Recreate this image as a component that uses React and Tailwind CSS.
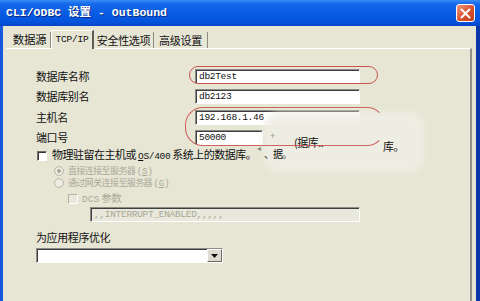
import React from "react";

const cjk = "font-['Noto_Sans_CJK_SC',sans-serif]";
const mono = "font-['Liberation_Mono','Noto_Sans_CJK_SC',monospace]";

function Input({ value, w, disabled }) {
  return (
    <div
      className={`h-[15px] flex items-center pl-[2px] border-t border-l border-t-[#8c8c86] border-l-[#8c8c86] border-b border-r border-b-[#ffffff] border-r-[#ffffff] shadow-[inset_1px_1px_0_#3e3e3e] ${
        disabled ? "bg-[#e9e8dc] text-[#a9a797]" : "bg-white text-[#111]"
      } ${mono} text-[9.5px] tracking-[-0.3px] leading-none`}
      style={{ width: w }}
    >
      <span className="pl-[1px]">{value}</span>
    </div>
  );
}

function Row({ label, value, w = 165, className = "" }) {
  return (
    <div className={`flex items-center h-[15px] ${className}`}>
      <div className={`w-[159px] text-[11px] tracking-[-0.4px] leading-none text-[#111] ${cjk}`}>{label}</div>
      <Input value={value} w={w} />
    </div>
  );
}

function Check({ disabled }) {
  return (
    <div
      className={`w-[10px] h-[10px] shrink-0 border-t border-l border-b border-r ${
        disabled
          ? "bg-[#e9e8dc] border-t-[#b4b2a4] border-l-[#b4b2a4] border-b-white border-r-white"
          : "bg-white border-t-[#6e6e6a] border-l-[#6e6e6a] border-b-white border-r-white shadow-[inset_1px_1px_0_#3a3a3a]"
      }`}
    />
  );
}

function Radio({ checked }) {
  return (
    <div className="w-[10px] h-[10px] shrink-0 rounded-full border border-[#b7b5a7] bg-[#ecebdf] flex items-center justify-center">
      {checked && <div className="w-[4px] h-[4px] rounded-full bg-[#a9a797]" />}
    </div>
  );
}

export default function App() {
  return (
    <div className="w-[480px] h-[301px] overflow-hidden relative flex flex-col bg-[#0b56e0]">
      {/* Title bar */}
      <div className="h-[26px] shrink-0 flex items-center justify-between pl-[6px] pr-[5px] bg-[linear-gradient(#3a8cf5_0%,#1469ea_15%,#0759e2_60%,#0553dc_85%,#0645c4_100%)]">
        <div className={`text-white font-bold text-[11.5px] leading-none whitespace-pre [text-shadow:1px_1px_0_#0b2a80] ${mono}`}>
          CLI/ODBC 设置 - OutBound
        </div>
        <div className="w-[19px] h-[18px] rounded-[3px] border border-white bg-[linear-gradient(135deg,#f09a7c,#d8502e_55%,#c2401f)] flex items-center justify-center">
          <svg width="11" height="11" viewBox="0 0 11 11">
            <path d="M1.5 1.5 L9.5 9.5 M9.5 1.5 L1.5 9.5" stroke="white" strokeWidth="2" strokeLinecap="round" />
          </svg>
        </div>
      </div>

      {/* Body */}
      <div className="flex-1 flex min-h-0">
        <div className="w-[3px] bg-[#1658de]" />
        <div className="flex-1 bg-[#e7e6d5] flex flex-col pl-[3px] pr-[4px] pt-[4px] min-w-0">
          {/* Tabs */}
          <div className="h-[18px] flex items-end pl-[3px] shrink-0 relative z-10">
            <div className={`w-[42px] h-[16px] flex items-center justify-center border-r border-r-[#8e8c7e] text-[11.5px] tracking-[-0.3px] leading-none text-[#111] ${cjk}`}>
              数据源
            </div>
            <div className={`w-[43px] h-[19px] -mb-[1px] bg-[#e7e6d5] flex items-center justify-center border-t border-l border-t-white border-l-white border-r-2 border-r-[#5e5c54] text-[9.5px] tracking-[-0.2px] leading-none text-[#111] ${mono}`}>
              TCP/IP
            </div>
            <div className={`w-[60px] h-[16px] flex items-center justify-center border-r border-r-[#8e8c7e] text-[11px] tracking-[-0.3px] leading-none text-[#111] ${cjk}`}>
              安全性选项
            </div>
            <div className={`w-[54px] h-[16px] flex items-center justify-center border-r border-r-[#8e8c7e] text-[11px] tracking-[-0.3px] leading-none text-[#111] ${cjk}`}>
              高级设置
            </div>
          </div>

          {/* Panel */}
          <div className="flex-1 border-t border-t-white border-r-2 border-r-[#93918a] flex flex-col pl-[30px] pt-[20px]">
            <Row label="数据库名称" value="db2Test" />
            <Row label="数据库别名" value="db2123" className="mt-[5px]" />
            <Row label="主机名" value="192.168.1.46" className="mt-[6px]" />
            <Row label="端口号" value="50000" w={68} className="mt-[5px]" />

            <div className={`mt-[4px] h-[13px] flex items-center pl-[1px] gap-[5px] text-[11px] tracking-[-0.5px] leading-none text-[#111] ${cjk}`}>
              <Check />
              <span className="whitespace-pre">
                物理驻留在主机或 <span className={`${mono} text-[9.5px] tracking-[-0.3px]`}><span className="underline">O</span>S/400</span> 系统上的数据库。
              </span>
            </div>

            <div className={`mt-[3px] h-[12px] flex items-center pl-[18px] gap-[4px] text-[9px] tracking-[-0.6px] leading-none text-[#aaa898] ${cjk}`}>
              <Radio checked />
              <span className="whitespace-pre">
                直接连接至服务器 <span className={`${mono} text-[9px] tracking-normal`}>(<span className="underline">S</span>)</span>
              </span>
            </div>
            <div className={`h-[12px] flex items-center pl-[18px] gap-[4px] text-[9px] tracking-[-0.6px] leading-none text-[#aaa898] ${cjk}`}>
              <Radio />
              <span className="whitespace-pre">
                通过网关连接至服务器 <span className={`${mono} text-[9px] tracking-normal`}>(<span className="underline">G</span>)</span>
              </span>
            </div>

            <div className={`mt-[4px] h-[12px] flex items-center pl-[32px] gap-[4px] text-[10.5px] tracking-[-0.3px] leading-none text-[#aaa898] ${cjk}`}>
              <Check disabled />
              <span className="whitespace-pre">
                <span className={`${mono} text-[9.5px] tracking-normal`}>DCS</span> 参数
              </span>
            </div>
            <div className="mt-[2px] pl-[54px]">
              <Input value=",,INTERRUPT_ENABLED,,,,," w={270} disabled />
            </div>

            <div className={`mt-[8px] h-[14px] flex items-center text-[11px] tracking-[-0.4px] leading-none text-[#111] ${cjk}`}>
              为应用程序优化
            </div>
            <div className="mt-[4px] w-[187px] h-[15px] bg-white flex justify-end border-t border-l border-t-[#8c8c86] border-l-[#8c8c86] border-b border-r border-b-white border-r-white shadow-[inset_1px_1px_0_#3e3e3e]">
              <div className="w-[15px] h-full bg-[#dedcd0] border-t border-l border-t-white border-l-white border-r border-b border-r-[#6a6862] border-b-[#6a6862] flex items-center justify-center">
                <svg width="7" height="4" viewBox="0 0 7 4">
                  <path d="M0 0 H7 L3.5 4 Z" fill="#111" />
                </svg>
              </div>
            </div>
          </div>
        </div>
        <div className="w-[4px] bg-[#0b37a8]" />
      </div>

      {/* Editing smudge over the right part of the form */}
      <div className="absolute left-[264px] top-[112px] w-[160px] h-[60px] bg-[#efeee5] rounded-[16px] blur-[3px] opacity-90" />
      <div className="absolute left-[257px] top-[144px] text-[8px] leading-none text-[#8a8a84]">◂</div>
      <div className="absolute left-[270px] top-[131px] text-[9px] leading-none text-[#9a9a92]">+</div>
      <div className={`absolute left-[294px] top-[137px] text-[11px] tracking-[-0.5px] leading-none text-[#111] ${cjk}`}>(据库..</div>
      <div className={`absolute left-[383px] top-[141px] text-[11px] tracking-[-0.5px] leading-none text-[#111] ${cjk}`}>库。</div>
      <div className={`absolute left-[264px] top-[149px] text-[10px] tracking-[-1px] leading-none text-[#111] ${cjk}`}>、据。</div>

      {/* Red annotation loops */}
      <div className="absolute left-[189px] top-[66px] w-[189px] h-[18px] rounded-[9px] border-[1.5px] border-[#c8564e]" />
      <div className="absolute left-[185px] top-[107px] w-[200px] h-[39px] rounded-[18px] border-[1.5px] border-[#c8564e] border-r-transparent opacity-90" />
    </div>
  );
}
